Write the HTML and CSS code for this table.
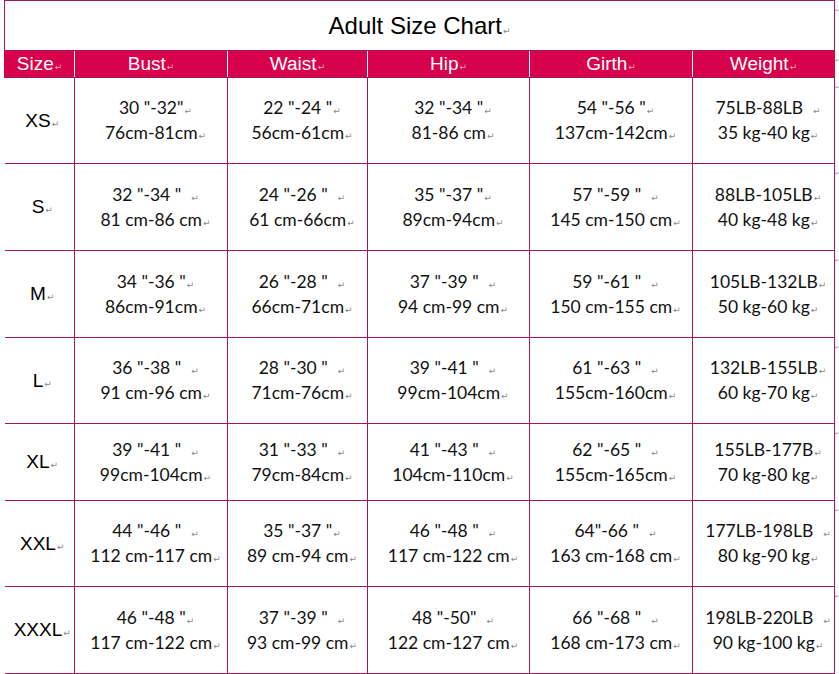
FILE: index.html
```html
<!DOCTYPE html>
<html lang="en">
<head>
<meta charset="utf-8">
<title>Adult Size Chart</title>
<link rel="stylesheet" href="styles.css">
</head>
<body>
<table class="chart">
  <colgroup>
    <col class="c-size"><col class="c-bust"><col class="c-waist"><col class="c-hip"><col class="c-girth"><col class="c-weight"><col class="c-end">
  </colgroup>
  <tr class="r-title">
    <td class="title" colspan="6">Adult Size Chart<span class="pm">↵</span></td>
    <td class="end"><span class="pm">↵</span></td>
  </tr>
  <tr class="r-head">
    <th class="hfirst">Size<span class="pm">↵</span></th>
    <th>Bust<span class="pm">↵</span></th>
    <th>Waist<span class="pm">↵</span></th>
    <th>Hip<span class="pm">↵</span></th>
    <th>Girth<span class="pm">↵</span></th>
    <th class="hlast">Weight<span class="pm">↵</span></th>
    <td class="end"><span class="pm">↵</span></td>
  </tr>
  <tr class="r-row h86">
    <td class="size">XS<span class="pm">↵</span></td>
    <td class="val"><div>30 "-32"<span class="pm">↵</span></div><div>76cm-81cm<span class="pm">↵</span></div></td>
    <td class="val"><div>22 "-24 "<span class="pm">↵</span></div><div>56cm-61cm<span class="pm">↵</span></div></td>
    <td class="val"><div>32 "-34 "<span class="pm">↵</span></div><div>81-86 cm<span class="pm">↵</span></div></td>
    <td class="val"><div>54 "-56 "<span class="pm">↵</span></div><div>137cm-142cm<span class="pm">↵</span></div></td>
    <td class="val"><div>75LB-88LB<span class="pm sp">↵</span></div><div>35 kg-40 kg<span class="pm">↵</span></div></td>
    <td class="end"><span class="pm">↵</span></td>
  </tr>
  <tr class="r-row h87">
    <td class="size">S<span class="pm">↵</span></td>
    <td class="val"><div>32 "-34 "<span class="pm sp">↵</span></div><div>81 cm-86 cm<span class="pm">↵</span></div></td>
    <td class="val"><div>24 "-26 "<span class="pm sp">↵</span></div><div>61 cm-66cm<span class="pm">↵</span></div></td>
    <td class="val"><div>35 "-37 "<span class="pm">↵</span></div><div>89cm-94cm<span class="pm">↵</span></div></td>
    <td class="val"><div>57 "-59 "<span class="pm sp">↵</span></div><div>145 cm-150 cm<span class="pm">↵</span></div></td>
    <td class="val"><div>88LB-105LB<span class="pm">↵</span></div><div>40 kg-48 kg<span class="pm">↵</span></div></td>
    <td class="end"><span class="pm">↵</span></td>
  </tr>
  <tr class="r-row h87">
    <td class="size">M<span class="pm">↵</span></td>
    <td class="val"><div>34 "-36 "<span class="pm">↵</span></div><div>86cm-91cm<span class="pm">↵</span></div></td>
    <td class="val"><div>26 "-28 "<span class="pm sp">↵</span></div><div>66cm-71cm<span class="pm">↵</span></div></td>
    <td class="val"><div>37 "-39 "<span class="pm sp">↵</span></div><div>94 cm-99 cm<span class="pm">↵</span></div></td>
    <td class="val"><div>59 "-61 "<span class="pm sp">↵</span></div><div>150 cm-155 cm<span class="pm">↵</span></div></td>
    <td class="val"><div>105LB-132LB<span class="pm">↵</span></div><div>50 kg-60 kg<span class="pm">↵</span></div></td>
    <td class="end"><span class="pm">↵</span></td>
  </tr>
  <tr class="r-row h86">
    <td class="size">L<span class="pm">↵</span></td>
    <td class="val"><div>36 "-38 "<span class="pm sp">↵</span></div><div>91 cm-96 cm<span class="pm">↵</span></div></td>
    <td class="val"><div>28 "-30 "<span class="pm sp">↵</span></div><div>71cm-76cm<span class="pm">↵</span></div></td>
    <td class="val"><div>39 "-41 "<span class="pm sp">↵</span></div><div>99cm-104cm<span class="pm">↵</span></div></td>
    <td class="val"><div>61 "-63 "<span class="pm sp">↵</span></div><div>155cm-160cm<span class="pm">↵</span></div></td>
    <td class="val"><div>132LB-155LB<span class="pm">↵</span></div><div>60 kg-70 kg<span class="pm">↵</span></div></td>
    <td class="end"><span class="pm">↵</span></td>
  </tr>
  <tr class="r-row h77">
    <td class="size">XL<span class="pm">↵</span></td>
    <td class="val"><div>39 "-41 "<span class="pm sp">↵</span></div><div>99cm-104cm<span class="pm">↵</span></div></td>
    <td class="val"><div>31 "-33 "<span class="pm sp">↵</span></div><div>79cm-84cm<span class="pm">↵</span></div></td>
    <td class="val"><div>41 "-43 "<span class="pm sp">↵</span></div><div>104cm-110cm<span class="pm">↵</span></div></td>
    <td class="val"><div>62 "-65 "<span class="pm sp">↵</span></div><div>155cm-165cm<span class="pm">↵</span></div></td>
    <td class="val"><div>155LB-177B<span class="pm">↵</span></div><div>70 kg-80 kg<span class="pm">↵</span></div></td>
    <td class="end"><span class="pm">↵</span></td>
  </tr>
  <tr class="r-row h86">
    <td class="size">XXL<span class="pm">↵</span></td>
    <td class="val"><div>44 "-46 "<span class="pm sp">↵</span></div><div>112 cm-117 cm<span class="pm">↵</span></div></td>
    <td class="val"><div>35 "-37 "<span class="pm">↵</span></div><div>89 cm-94 cm<span class="pm">↵</span></div></td>
    <td class="val"><div>46 "-48 "<span class="pm sp">↵</span></div><div>117 cm-122 cm<span class="pm">↵</span></div></td>
    <td class="val"><div>64"-66 "<span class="pm sp">↵</span></div><div>163 cm-168 cm<span class="pm">↵</span></div></td>
    <td class="val"><div>177LB-198LB<span class="pm sp">↵</span></div><div>80 kg-90 kg<span class="pm">↵</span></div></td>
    <td class="end"><span class="pm">↵</span></td>
  </tr>
  <tr class="r-row h87">
    <td class="size">XXXL<span class="pm">↵</span></td>
    <td class="val"><div>46 "-48 "<span class="pm">↵</span></div><div>117 cm-122 cm<span class="pm">↵</span></div></td>
    <td class="val"><div>37 "-39 "<span class="pm sp">↵</span></div><div>93 cm-99 cm<span class="pm">↵</span></div></td>
    <td class="val"><div>48 "-50"<span class="pm sp">↵</span></div><div>122 cm-127 cm<span class="pm">↵</span></div></td>
    <td class="val"><div>66 "-68 "<span class="pm sp">↵</span></div><div>168 cm-173 cm<span class="pm">↵</span></div></td>
    <td class="val"><div>198LB-220LB<span class="pm sp">↵</span></div><div>90 kg-100 kg<span class="pm">↵</span></div></td>
    <td class="end"><span class="pm">↵</span></td>
  </tr>
</table>
</body>
</html>
```

FILE: styles.css
```css
html, body {
  margin: 0;
  padding: 0;
  background: #ffffff;
  overflow: hidden;
}

.chart {
  border-collapse: collapse;
  table-layout: fixed;
  margin-left: 4px;
  width: 835px;
}

.c-size { width: 70px; }
.c-bust { width: 153px; }
.c-waist { width: 140px; }
.c-hip { width: 162px; }
.c-girth { width: 163px; }
.c-weight { width: 142px; }
.c-end { width: 5px; }

.chart td, .chart th {
  padding: 0;
  text-align: center;
  vertical-align: middle;
}

.pm {
  font-family: "DejaVu Sans", sans-serif;
  font-size: 9px;
  line-height: 1;
  color: #8a8a8a;
  margin-left: 1px;
}

.pm.sp {
  margin-left: 10px;
}

/* title */
.r-title { height: 50px; }
.title {
  border: 1px solid #a5175c;
  font-family: "Liberation Sans", Arial, sans-serif;
  font-size: 24px;
  color: #000;
  padding-top: 2px;
  padding-left: 4px;
}

/* header */
.r-head { height: 27px; }
.r-head th {
  background: #d8014b;
  color: #fff;
  font-family: "Liberation Sans", Arial, sans-serif;
  font-weight: normal;
  font-size: 19px;
  border-left: 1px solid #ffffff;
  border-right: 1px solid #ffffff;
  border-top: 1px solid #d8014b;
  border-bottom: 1px solid #a5175c;
}
.r-head th .pm { color: #f2a7bf; }
.r-head th.hfirst { border-left: 1px solid #d8014b; }
.r-head th.hlast { border-right: 1px solid #d8014b; }

/* body rows */
.h86 { height: 86px; }
.h87 { height: 87px; }
.h77 { height: 77px; }

.r-row td.size,
.r-row td.val {
  border: 1px solid #a5175c;
}
.r-row td.size {
  border-left: none;
  font-family: "Liberation Sans", Arial, sans-serif;
  font-size: 19px;
  color: #000;
  padding-left: 6px;
}

.r-row td.val {
  font-family: Lato, "Open Sans", sans-serif;
  font-size: 17.5px;
  line-height: 25px;
  color: #111;
  padding-left: 9px;
  padding-bottom: 1px;
}

.chart td.end {
  border: none;
  vertical-align: top;
  text-align: left;
  padding-left: 0;
  padding-top: 2px;
  line-height: 8px;
}
.chart td.end .pm {
  margin-left: 0;
  font-size: 5px;
}
```
